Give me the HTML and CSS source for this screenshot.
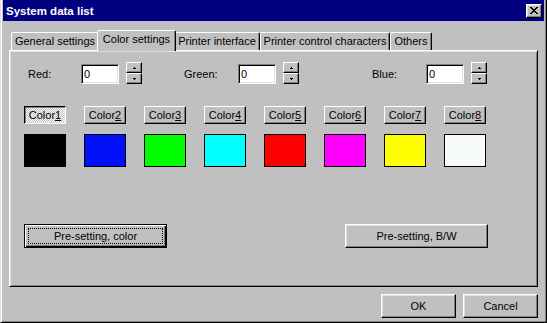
FILE: index.html
```html
<!DOCTYPE html>
<html>
<head>
<meta charset="utf-8">
<link rel="stylesheet" href="styles.css">
</head>
<body>
<div class="window">
  <div class="titlebar">
    <span class="title">System data list</span>
    <button class="close"><svg width="8" height="7" viewBox="0 0 8 7" shape-rendering="crispEdges"><path fill="#000" d="M0 0h2v1h-2zM6 0h2v1h-2zM1 1h2v1h-2zM5 1h2v1h-2zM2 2h4v1h-4zM3 3h2v1h-2zM2 4h4v1h-4zM1 5h2v1h-2zM5 5h2v1h-2zM0 6h2v1h-2zM6 6h2v1h-2z"/></svg></button>
  </div>
  <div class="content">
    <div class="tabs">
      <div class="tab t-general">General settings</div>
      <div class="tab t-color active">Color settings</div>
      <div class="tab t-printer">Printer interface</div>
      <div class="tab t-pcc">Printer control characters</div>
      <div class="tab t-others">Others</div>
    </div>
    <div class="panel">
      <div class="rgb-row">
        <div class="field f-red">
          <span class="lbl">Red:</span>
          <div class="num">0</div>
          <div class="spin">
            <div class="spin-btn"><svg width="3" height="2" viewBox="0 0 3 2" shape-rendering="crispEdges"><path d="M1 0h1v1h1v1h-3v-1h1z"/></svg></div>
            <div class="spin-btn"><svg width="3" height="2" viewBox="0 0 3 2" shape-rendering="crispEdges"><path d="M0 0h3v1h-1v1h-1v-1h-1z"/></svg></div>
          </div>
        </div>
        <div class="field f-green">
          <span class="lbl">Green:</span>
          <div class="num">0</div>
          <div class="spin">
            <div class="spin-btn"><svg width="3" height="2" viewBox="0 0 3 2" shape-rendering="crispEdges"><path d="M1 0h1v1h1v1h-3v-1h1z"/></svg></div>
            <div class="spin-btn"><svg width="3" height="2" viewBox="0 0 3 2" shape-rendering="crispEdges"><path d="M0 0h3v1h-1v1h-1v-1h-1z"/></svg></div>
          </div>
        </div>
        <div class="field f-blue">
          <span class="lbl">Blue:</span>
          <div class="num">0</div>
          <div class="spin">
            <div class="spin-btn"><svg width="3" height="2" viewBox="0 0 3 2" shape-rendering="crispEdges"><path d="M1 0h1v1h1v1h-3v-1h1z"/></svg></div>
            <div class="spin-btn"><svg width="3" height="2" viewBox="0 0 3 2" shape-rendering="crispEdges"><path d="M0 0h3v1h-1v1h-1v-1h-1z"/></svg></div>
          </div>
        </div>
      </div>
      <div class="color-grid">
        <button class="cbtn checked">Color<u>1</u></button>
        <button class="cbtn">Color<u>2</u></button>
        <button class="cbtn">Color<u>3</u></button>
        <button class="cbtn">Color<u>4</u></button>
        <button class="cbtn">Color<u>5</u></button>
        <button class="cbtn">Color<u>6</u></button>
        <button class="cbtn">Color<u>7</u></button>
        <button class="cbtn">Color<u>8</u></button>
      </div>
      <div class="color-grid swatches">
        <div class="swatch s-black"></div>
        <div class="swatch s-blue"></div>
        <div class="swatch s-green"></div>
        <div class="swatch s-cyan"></div>
        <div class="swatch s-red"></div>
        <div class="swatch s-magenta"></div>
        <div class="swatch s-yellow"></div>
        <div class="swatch s-white"></div>
      </div>
      <div class="preset-row">
        <button class="btn preset default"><span class="focus">Pre-setting, color</span></button>
        <button class="btn preset">Pre-setting, B/W</button>
      </div>
    </div>
    <div class="footer">
      <button class="btn dlg">OK</button>
      <button class="btn dlg">Cancel</button>
    </div>
  </div>
</div>
</body>
</html>
```
FILE: styles.css
```css
* { box-sizing: border-box; }
html, body { margin: 0; padding: 0; }
body {
  width: 547px;
  height: 323px;
  overflow: hidden;
  background: #c0c0c0;
  font-family: "Liberation Sans", Arial, sans-serif;
  font-size: 11px;
  color: #000;
}
button {
  font: inherit;
  color: #000;
  margin: 0;
  padding: 0;
}
.window {
  width: 547px;
  height: 323px;
  background: #c0c0c0;
  border-left: 1px solid #dfdfdf;
  border-right: 1px solid #000;
  border-bottom: 1px solid #000;
  box-shadow: inset 1px 0 #fff, inset -1px -1px #808080;
  padding: 0 2px 2px 2px;
  display: flex;
  flex-direction: column;
}
.titlebar {
  height: 21px;
  background: #000080;
  display: flex;
  align-items: center;
  justify-content: space-between;
  padding: 0 2px 0 3px;
}
.title {
  color: #fff;
  font-weight: bold;
  font-size: 11.5px;
  line-height: 16px;
}
.close {
  width: 16px;
  height: 14px;
  background: #c0c0c0;
  border: 1px solid;
  border-color: #fff #000 #000 #fff;
  box-shadow: inset -1px -1px #808080, inset 1px 1px #dfdfdf;
  display: flex;
  align-items: center;
  justify-content: center;
}
.close svg { display: block; }
.content {
  padding: 0 6px;
  display: flex;
  flex-direction: column;
}
.tabs {
  display: flex;
  align-items: flex-end;
  height: 20px;
  margin-top: 9px;
  padding-left: 2px;
  position: relative;
  z-index: 1;
}
.tab {
  height: 18px;
  border: 1px solid;
  border-bottom: none;
  border-color: #fff #000 transparent #fff;
  border-radius: 2px 2px 0 0;
  box-shadow: inset -1px 0 #808080;
  background: #c0c0c0;
  text-align: center;
  line-height: 17px;
  white-space: nowrap;
}
.t-general { width: 88px; }
.t-color { width: 79px; }
.t-printer { width: 86px; }
.t-pcc { width: 130px; }
.t-others { width: 42px; }
.tab.active {
  height: 21px;
  margin: 0 -2px -1px;
  position: relative;
  z-index: 2;
}
.panel {
  height: 237px;
  border: 1px solid;
  border-color: #fff #000 #000 #fff;
  box-shadow: inset 1px 1px #dfdfdf, inset -1px -1px #808080;
  display: flex;
  flex-direction: column;
}
.rgb-row {
  display: flex;
  align-items: flex-end;
  margin-top: 11px;
  padding-left: 18px;
  height: 22px;
}
.field {
  display: flex;
  align-items: flex-end;
}
.f-green { margin-left: 42px; }
.f-blue { margin-left: 73px; }
.lbl {
  height: 20px;
  line-height: 20px;
}
.f-red .lbl { width: 53px; }
.f-green .lbl, .f-blue .lbl { width: 54px; }
.num {
  width: 38px;
  height: 20px;
  background: #fff;
  color: #000;
  border: 1px solid;
  border-color: #808080 #fff #fff #808080;
  box-shadow: inset 1px 1px #000, inset -1px -1px #dfdfdf;
  padding: 0 2px;
  line-height: 18px;
}
.spin {
  margin-left: 7px;
  display: flex;
  flex-direction: column;
  width: 16px;
  height: 22px;
}
.spin-btn {
  height: 11px;
  background: #c0c0c0;
  border: 1px solid;
  border-color: #fff #000 #000 #fff;
  box-shadow: inset -1px -1px #808080;
  display: flex;
  align-items: center;
  justify-content: center;
}
.spin-btn svg { display: block; fill: #000; }
.color-grid {
  display: grid;
  grid-template-columns: repeat(8, 42px);
  column-gap: 18px;
  margin-left: 14px;
}
.color-grid:not(.swatches) { margin-top: 22px; }
.cbtn {
  height: 18px;
  background: #c0c0c0;
  border: 1px solid;
  border-color: #fff #000 #000 #fff;
  box-shadow: inset -1px -1px #808080;
  line-height: 14px;
  text-align: center;
}
.cbtn.checked {
  border-color: #000 #fff #fff #000;
  box-shadow: inset 1px 1px #808080, inset -1px -1px #dfdfdf;
  background: repeating-conic-gradient(#fff 0 25%, #c0c0c0 0 50%) 0 0 / 2px 2px;
}
.swatches { margin-top: 10px; }
.swatch {
  height: 33px;
  border: 1px solid #000;
}
.s-black { background: #000; }
.s-blue { background: #0010f8; }
.s-green { background: #00ff00; }
.s-cyan { background: #00ffff; }
.s-red { background: #ff0000; }
.s-magenta { background: #ff00ff; }
.s-yellow { background: #ffff00; }
.s-white { background: #f8fcf8; }
.preset-row {
  display: flex;
  gap: 178px;
  margin-top: 57px;
  margin-left: 14px;
}
.btn {
  height: 24px;
  background: #c0c0c0;
  border: 1px solid;
  border-color: #fff #000 #000 #fff;
  box-shadow: inset -1px -1px #808080, inset 1px 1px #dfdfdf;
  text-align: center;
}
.preset { width: 143px; }
.btn.default {
  border-color: #000;
  box-shadow: inset 1px 1px #fff, inset -1px -1px #000, inset -2px -2px #808080;
  padding: 3px;
  display: flex;
}
.focus {
  flex: 1;
  border: 1px dotted #000;
  display: flex;
  align-items: center;
  justify-content: center;
}
.footer {
  display: flex;
  justify-content: flex-end;
  gap: 7px;
  margin-top: 7px;
}
.dlg { width: 75px; }
```
